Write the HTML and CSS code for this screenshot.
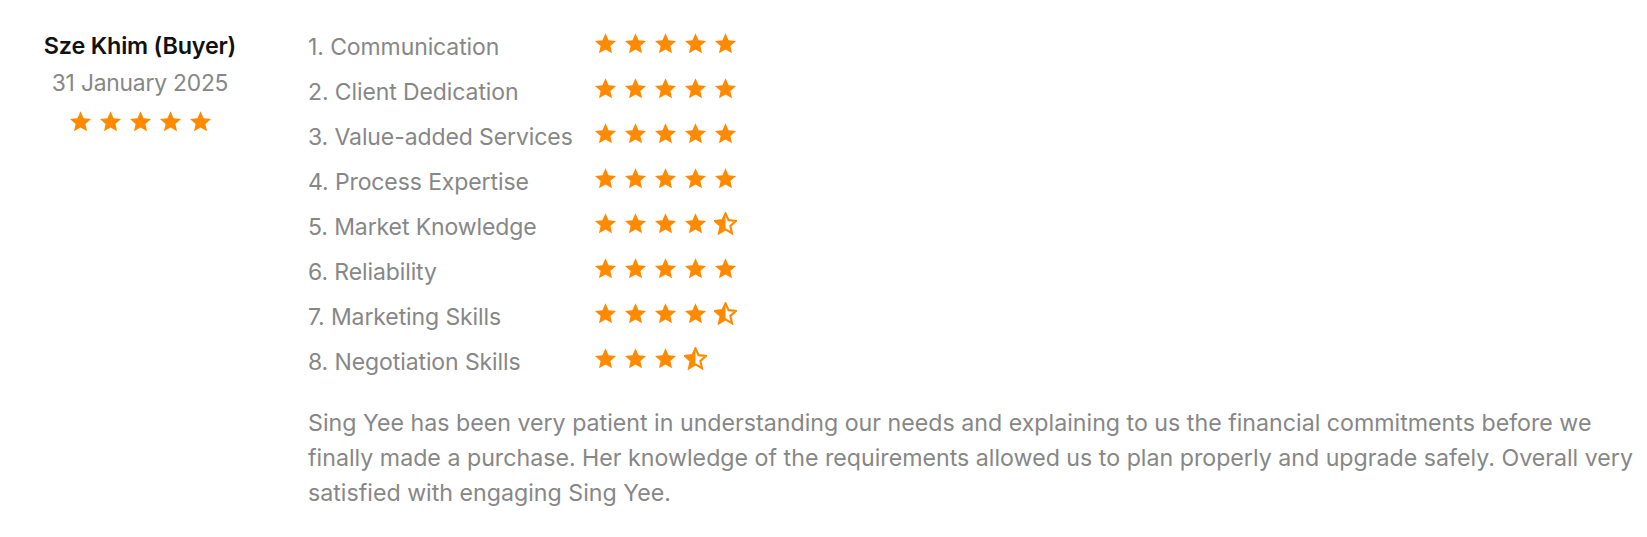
FILE: index.html
```html
<!DOCTYPE html>
<html lang="en">
<head>
<meta charset="utf-8">
<title>Review</title>
<link rel="stylesheet" href="styles.css">
</head>
<body>
<svg width="0" height="0" class="defs" aria-hidden="true">
  <defs>
    <path id="star-shape" d="M12 1.4l3.2 7.1 7.8.8-5.9 5.2 1.7 7.7L12 18.2 5.2 22.2l1.7-7.7L1 9.3l7.8-.8z"/>
    <clipPath id="half-left"><rect x="0" y="0" width="12" height="24"/></clipPath>
  </defs>
</svg>
<div class="review">
  <div class="reviewer">
    <div class="name">Sze Khim (Buyer)</div>
    <div class="date">31 January 2025</div>
    <div class="stars">
      <svg class="star" viewBox="0 0 24 24"><use href="#star-shape"/></svg>
      <svg class="star" viewBox="0 0 24 24"><use href="#star-shape"/></svg>
      <svg class="star" viewBox="0 0 24 24"><use href="#star-shape"/></svg>
      <svg class="star" viewBox="0 0 24 24"><use href="#star-shape"/></svg>
      <svg class="star" viewBox="0 0 24 24"><use href="#star-shape"/></svg>
    </div>
  </div>
  <div class="details">
    <div class="ratings">
      <div class="row"><span class="label">1. Communication</span><span class="stars"><svg class="star" viewBox="0 0 24 24"><use href="#star-shape"/></svg><svg class="star" viewBox="0 0 24 24"><use href="#star-shape"/></svg><svg class="star" viewBox="0 0 24 24"><use href="#star-shape"/></svg><svg class="star" viewBox="0 0 24 24"><use href="#star-shape"/></svg><svg class="star" viewBox="0 0 24 24"><use href="#star-shape"/></svg></span></div>
      <div class="row"><span class="label">2. Client Dedication</span><span class="stars"><svg class="star" viewBox="0 0 24 24"><use href="#star-shape"/></svg><svg class="star" viewBox="0 0 24 24"><use href="#star-shape"/></svg><svg class="star" viewBox="0 0 24 24"><use href="#star-shape"/></svg><svg class="star" viewBox="0 0 24 24"><use href="#star-shape"/></svg><svg class="star" viewBox="0 0 24 24"><use href="#star-shape"/></svg></span></div>
      <div class="row"><span class="label">3. Value-added Services</span><span class="stars"><svg class="star" viewBox="0 0 24 24"><use href="#star-shape"/></svg><svg class="star" viewBox="0 0 24 24"><use href="#star-shape"/></svg><svg class="star" viewBox="0 0 24 24"><use href="#star-shape"/></svg><svg class="star" viewBox="0 0 24 24"><use href="#star-shape"/></svg><svg class="star" viewBox="0 0 24 24"><use href="#star-shape"/></svg></span></div>
      <div class="row"><span class="label">4. Process Expertise</span><span class="stars"><svg class="star" viewBox="0 0 24 24"><use href="#star-shape"/></svg><svg class="star" viewBox="0 0 24 24"><use href="#star-shape"/></svg><svg class="star" viewBox="0 0 24 24"><use href="#star-shape"/></svg><svg class="star" viewBox="0 0 24 24"><use href="#star-shape"/></svg><svg class="star" viewBox="0 0 24 24"><use href="#star-shape"/></svg></span></div>
      <div class="row"><span class="label">5. Market Knowledge</span><span class="stars"><svg class="star" viewBox="0 0 24 24"><use href="#star-shape"/></svg><svg class="star" viewBox="0 0 24 24"><use href="#star-shape"/></svg><svg class="star" viewBox="0 0 24 24"><use href="#star-shape"/></svg><svg class="star" viewBox="0 0 24 24"><use href="#star-shape"/></svg><svg class="star half" viewBox="0 0 24 24"><use class="outline" href="#star-shape"/><use href="#star-shape" clip-path="url(#half-left)"/></svg></span></div>
      <div class="row"><span class="label">6. Reliability</span><span class="stars"><svg class="star" viewBox="0 0 24 24"><use href="#star-shape"/></svg><svg class="star" viewBox="0 0 24 24"><use href="#star-shape"/></svg><svg class="star" viewBox="0 0 24 24"><use href="#star-shape"/></svg><svg class="star" viewBox="0 0 24 24"><use href="#star-shape"/></svg><svg class="star" viewBox="0 0 24 24"><use href="#star-shape"/></svg></span></div>
      <div class="row"><span class="label">7. Marketing Skills</span><span class="stars"><svg class="star" viewBox="0 0 24 24"><use href="#star-shape"/></svg><svg class="star" viewBox="0 0 24 24"><use href="#star-shape"/></svg><svg class="star" viewBox="0 0 24 24"><use href="#star-shape"/></svg><svg class="star" viewBox="0 0 24 24"><use href="#star-shape"/></svg><svg class="star half" viewBox="0 0 24 24"><use class="outline" href="#star-shape"/><use href="#star-shape" clip-path="url(#half-left)"/></svg></span></div>
      <div class="row"><span class="label">8. Negotiation Skills</span><span class="stars"><svg class="star" viewBox="0 0 24 24"><use href="#star-shape"/></svg><svg class="star" viewBox="0 0 24 24"><use href="#star-shape"/></svg><svg class="star" viewBox="0 0 24 24"><use href="#star-shape"/></svg><svg class="star half" viewBox="0 0 24 24"><use class="outline" href="#star-shape"/><use href="#star-shape" clip-path="url(#half-left)"/></svg></span></div>
    </div>
    <p class="comment">Sing Yee has been very patient in understanding our needs and explaining to us the financial commitments before we finally made a purchase. Her knowledge of the requirements allowed us to plan properly and upgrade safely. Overall very satisfied with engaging Sing Yee.</p>
  </div>
</div>
</body>
</html>
```
FILE: styles.css
```css
html, body {
  margin: 0;
  padding: 0;
  background: #ffffff;
}

body {
  font-family: Inter, "Noto Sans", "Liberation Sans", sans-serif;
  color: #878787;
}

.defs {
  position: absolute;
  width: 0;
  height: 0;
  overflow: hidden;
}

.review {
  display: flex;
  gap: 28px;
  padding: 24px 14px 20px 0;
}

.reviewer {
  width: 280px;
  flex: none;
  display: flex;
  flex-direction: column;
  align-items: center;
  padding-top: 7px;
}

.name {
  font-size: 23.4px;
  font-weight: 600;
  color: #111111;
  line-height: 30px;
  letter-spacing: -0.2px;
}

.date {
  font-size: 22.8px;
  line-height: 30px;
  margin-top: 7px;
  letter-spacing: -0.2px;
}

.stars {
  display: flex;
  gap: 7px;
}

.reviewer .stars {
  margin-top: 12px;
}

.star {
  width: 23px;
  height: 23px;
  display: block;
  fill: #ff8a00;
}

.star .outline {
  fill: none;
  stroke: #ff8a00;
  stroke-width: 2.2;
  stroke-linejoin: miter;
}

.details {
  flex: 1;
  min-width: 0;
}

.ratings {
  display: flex;
  flex-direction: column;
}

.row {
  display: flex;
  align-items: center;
  height: 45px;
}

.row .stars {
  margin-top: -6px;
}

.label {
  width: 286px;
  flex: none;
  font-size: 23px;
  letter-spacing: -0.1px;
}

.comment {
  margin: 22px 0 0;
  font-size: 23.2px;
  line-height: 35px;
  letter-spacing: 0;
}
```
